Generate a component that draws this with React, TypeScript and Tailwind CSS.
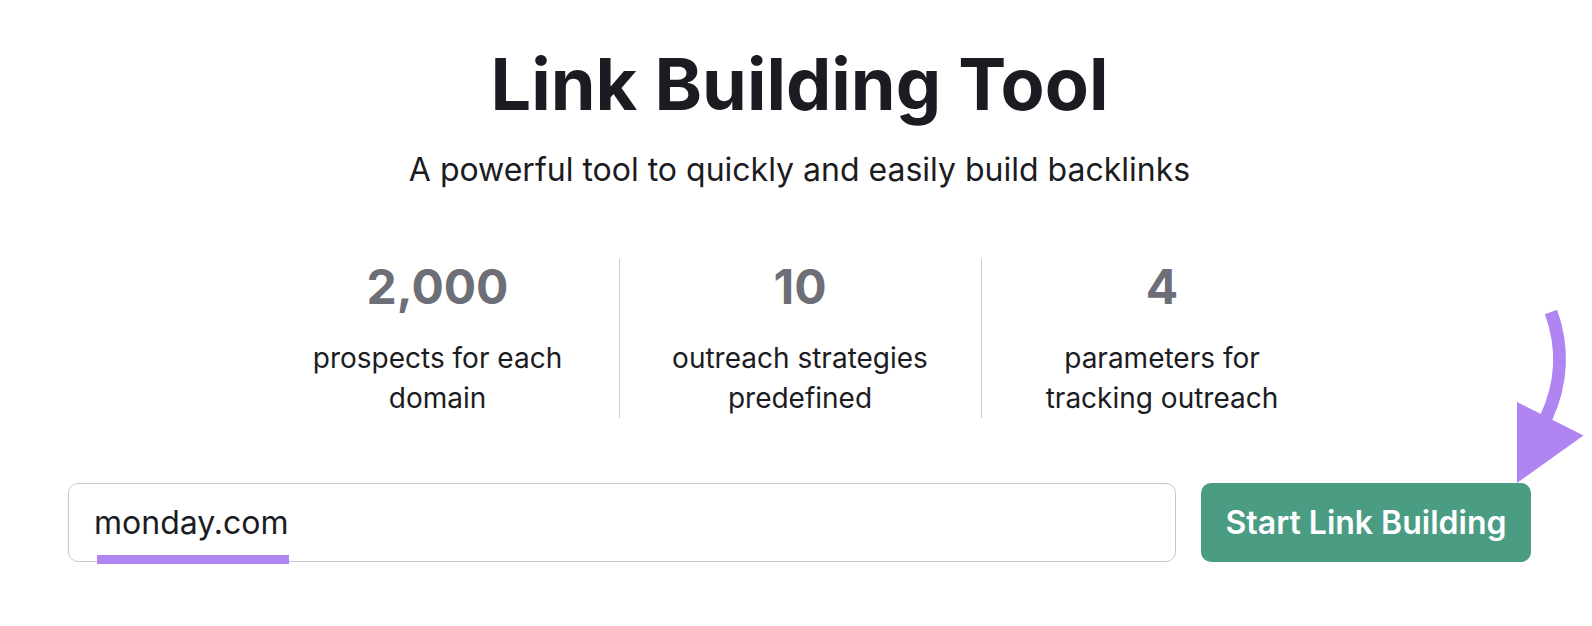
import React from "react";

const STATS = [
  { value: "2,000", lines: ["prospects for each", "domain"] },
  { value: "10", lines: ["outreach strategies", "predefined"] },
  { value: "4", lines: ["parameters for", "tracking outreach"] },
];

function CurvedArrow() {
  return (
    <svg
      className="absolute left-[1500px] top-[300px]"
      width="92"
      height="190"
      viewBox="1500 300 92 190"
    >
      <path
        d="M1551 312 C1563 345, 1563 382, 1546 418"
        fill="none"
        stroke="#b085f2"
        strokeWidth="13"
      />
      <polygon points="1517,402 1583.5,435.5 1517,483" fill="#b085f2" />
    </svg>
  );
}

export default function App() {
  return (
    <div className="relative h-[626px] w-full overflow-hidden bg-white font-[Inter,'Noto_Sans',sans-serif]">
      <div className="ml-[68px] flex w-[1463px] flex-col items-center">
        <h1 className="mt-[48px] text-[72px] font-bold leading-none text-[#1b1c22]">
          Link Building Tool
        </h1>
        <p className="mt-[32px] text-[32px] leading-[36px] text-[#1b1c22]">
          A powerful tool to quickly and easily build backlinks
        </p>

        {/* Stats */}
        <div className="mt-[71px] flex">
          {STATS.map((s, i) => (
            <div
              key={s.value}
              className={`flex w-[362px] flex-col items-center pt-[4px] ${
                i > 0 ? "border-l-[1.5px] border-[#cbcbcf]" : ""
              }`}
            >
              <div className="text-[48px] font-bold leading-none text-[#6d6e78]">{s.value}</div>
              <div className="mt-[27px] text-center text-[28px] leading-[40px] text-[#1b1c22]">
                {s.lines.map((l) => (
                  <div key={l}>{l}</div>
                ))}
              </div>
            </div>
          ))}
        </div>

        {/* Search row */}
        <div className="mt-[65px] flex w-full gap-[25px]">
          <div className="relative flex h-[79px] flex-1 items-center rounded-[10px] border-[1.5px] border-[#c8c8cc] pl-[25px]">
            <span className="text-[32px] leading-[36px] text-[#1b1c22]">monday.com</span>
            <div className="absolute left-[28px] top-[71px] h-[9px] w-[192px] bg-[#b085f2]" />
          </div>
          <button className="h-[79px] w-[330px] rounded-[10px] bg-[#4a9c83] text-[32px] font-semibold leading-[36px] text-white">
            Start Link Building
          </button>
        </div>
      </div>

      <CurvedArrow />
    </div>
  );
}
